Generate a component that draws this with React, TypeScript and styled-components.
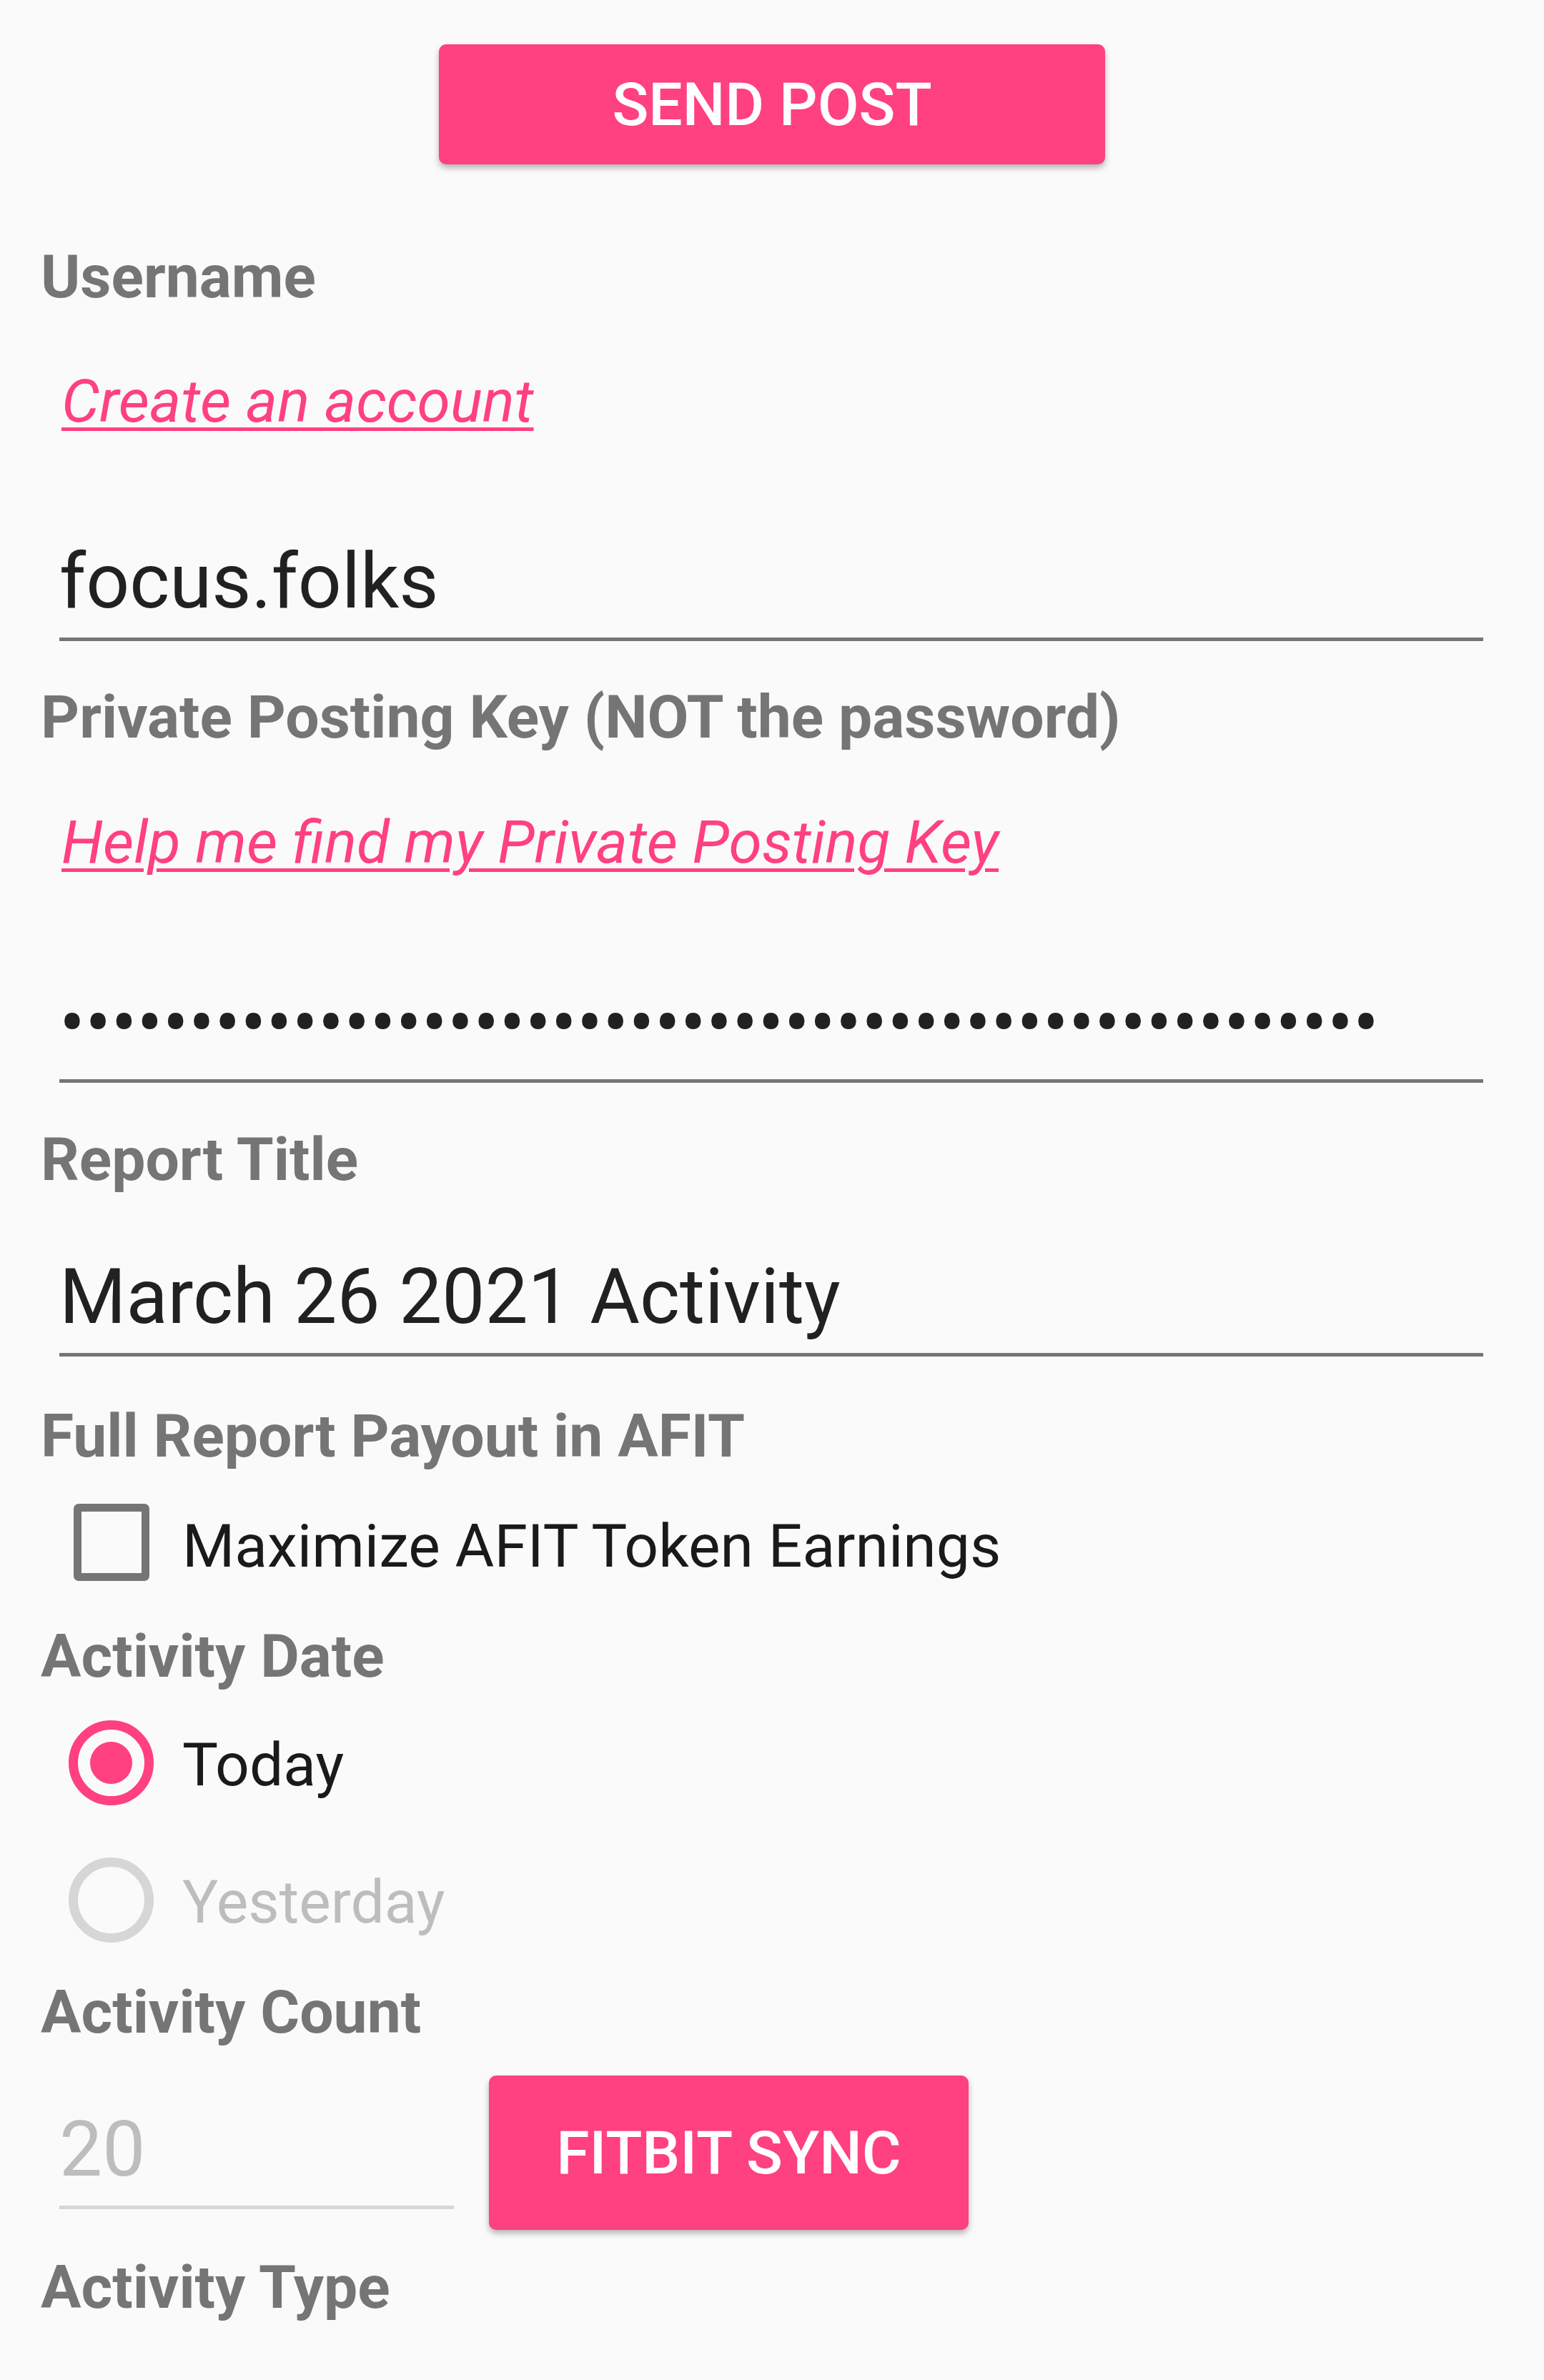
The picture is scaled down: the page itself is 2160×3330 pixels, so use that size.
import React from "react";
import styled, { createGlobalStyle } from "styled-components";

const pink = "#ff4081";

const GlobalStyle = createGlobalStyle`
  html, body {
    margin: 0;
    padding: 0;
    background: #fafafa;
  }
  body {
    font-family: Roboto, "Liberation Sans", sans-serif;
  }
`;

const Page = styled.div`
  padding-top: 62px;
  min-height: 3330px;
  box-sizing: border-box;
`;

const TopBar = styled.div`
  display: flex;
  justify-content: center;
`;

const RaisedButton = styled.button<{ $w: number; $h: number }>`
  width: ${(p) => p.$w}px;
  height: ${(p) => p.$h}px;
  border: none;
  border-radius: 10px;
  background: ${pink};
  color: #fff;
  font-family: Roboto, "Liberation Sans", sans-serif;
  font-weight: 500;
  font-size: 84px;
  text-transform: uppercase;
  box-shadow: 0 5px 9px rgba(0, 0, 0, 0.28);
  padding: 0;
  flex-shrink: 0;
`;

const Form = styled.div`
  display: flex;
  flex-direction: column;
  padding: 0 85px 0 57px;
`;

const Label = styled.div<{ $top: number }>`
  margin-top: ${(p) => p.$top}px;
  height: 100px;
  font-size: 84px;
  line-height: 100px;
  font-weight: 700;
  color: #757575;
  white-space: nowrap;
`;

const Link = styled.a<{ $top: number }>`
  display: block;
  align-self: flex-start;
  margin: ${(p) => p.$top}px 0 0 29px;
  height: 100px;
  font-size: 84px;
  line-height: 100px;
  font-style: italic;
  color: ${pink};
  text-decoration: underline;
  text-decoration-thickness: 5px;
  text-underline-offset: 8px;
  white-space: nowrap;
`;

const Field = styled.input<{ $top: number; $disabled?: boolean; $w?: number }>`
  display: block;
  box-sizing: content-box;
  margin: ${(p) => p.$top}px 0 0 26px;
  width: ${(p) => (p.$w ? `${p.$w}px` : "auto")};
  align-self: ${(p) => (p.$w ? "flex-start" : "stretch")};
  height: 130px;
  padding: 0 0 14px 0;
  border: none;
  border-bottom: 5px solid ${(p) => (p.$disabled ? "#d6d6d6" : "#757575")};
  background: transparent;
  outline: none;
  font-family: Roboto, "Liberation Sans", sans-serif;
  font-size: 107px;
  color: ${(p) => (p.$disabled ? "#bdbdbd" : "#212121")};
  flex-shrink: 0;
`;

const Dots = styled(Field)`
  letter-spacing: 0.1px;
`;

const CheckRow = styled.label<{ $top: number }>`
  display: flex;
  align-items: flex-start;
  margin: ${(p) => p.$top}px 0 0 46px;
`;

const Box = styled.span`
  width: 106px;
  height: 108px;
  box-sizing: border-box;
  border: 11px solid #757575;
  border-radius: 7px;
  flex-shrink: 0;
`;

const OptionText = styled.span<{ $off: number; $gap: number; $muted?: boolean }>`
  margin: ${(p) => p.$off}px 0 0 ${(p) => p.$gap}px;
  height: 100px;
  font-size: 84px;
  line-height: 100px;
  color: ${(p) => (p.$muted ? "#bdbdbd" : "#1a1a1a")};
  white-space: nowrap;
`;

const RadioRow = styled.label<{ $top: number }>`
  display: flex;
  align-items: flex-start;
  margin: ${(p) => p.$top}px 0 0 39px;
`;

const Radio = styled.span<{ $on?: boolean }>`
  width: 119px;
  height: 119px;
  box-sizing: border-box;
  border-radius: 50%;
  border: 13px solid ${(p) => (p.$on ? pink : "#d6d6d6")};
  display: flex;
  align-items: center;
  justify-content: center;
  flex-shrink: 0;

  &::after {
    content: "";
    display: ${(p) => (p.$on ? "block" : "none")};
    width: 59px;
    height: 59px;
    border-radius: 50%;
    background: ${pink};
  }
`;

const CountRow = styled.div`
  display: flex;
  align-items: flex-start;
  margin-top: 38px;
`;

const CountField = styled(Field)`
  margin-top: 38px;
`;

const SyncButton = styled(RaisedButton)`
  margin-left: 49px;
`;

export default function App() {
  return (
    <Page>
      <GlobalStyle />
      <TopBar>
        <RaisedButton $w={932} $h={168}>Send Post</RaisedButton>
      </TopBar>
      <Form>
        <Label $top={108}>Username</Label>
        <Link $top={74}>Create an account</Link>
        <Field $top={136} readOnly value="focus.folks" />

        <Label $top={57}>Private Posting Key (NOT the password)</Label>
        <Link $top={75}>Help me find my Private Posting Key</Link>
        <Dots $top={137} readOnly value={"\u2022".repeat(51)} />

        <Label $top={58}>Report Title</Label>
        <Field $top={76} readOnly value="March 26 2021 Activity" />

        <Label $top={62}>Full Report Payout in AFIT</Label>
        <CheckRow $top={44}>
          <Box />
          <OptionText $off={10} $gap={46}>Maximize AFIT Token Earnings</OptionText>
        </CheckRow>

        <Label $top={54}>Activity Date</Label>
        <RadioRow $top={39}>
          <Radio $on />
          <OptionText $off={13} $gap={40}>Today</OptionText>
        </RadioRow>
        <RadioRow $top={73}>
          <Radio />
          <OptionText $off={13} $gap={40} $muted>Yesterday</OptionText>
        </RadioRow>

        <Label $top={48}>Activity Count</Label>
        <CountRow>
          <CountField $top={38} $w={552} $disabled readOnly value="20" />
          <SyncButton $w={671} $h={216}>Fitbit Sync</SyncButton>
        </CountRow>

        <Label $top={31}>Activity Type</Label>
      </Form>
    </Page>
  );
}
